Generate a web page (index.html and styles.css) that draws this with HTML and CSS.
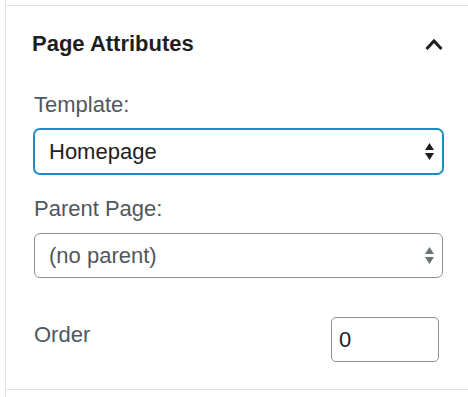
FILE: index.html
```html
<!DOCTYPE html>
<html lang="en">
<head>
  <meta charset="UTF-8">
  <meta name="viewport" content="width=device-width, initial-scale=1.0">
  <title>Page Attributes</title>
  <link rel="stylesheet" href="styles.css">
</head>
<body>
<div class="sidebar">
  <div class="panel">
    <div class="panel-header">
      <h2>Page Attributes</h2>
      <!-- collapse toggle -->
      <svg class="chevron" width="20" height="14" viewBox="0 0 20 14">
        <path d="M2.5 12 L10 4 L17.5 12" fill="none" stroke="#1e1e1e" stroke-width="3"/>
      </svg>
    </div>

    <div class="panel-body">
      <label class="field-label" for="template">Template:</label>
      <div class="select-wrap">
        <select id="template" class="select-field is-focused">
          <option>Homepage</option>
        </select>
        <svg class="select-arrows" width="9" height="17" viewBox="0 0 9 17">
          <path d="M4.5 0 L9 7 L0 7 Z M0 10 L9 10 L4.5 17 Z" fill="#1e1e1e"/>
        </svg>
      </div>

      <label class="field-label" for="parent">Parent Page:</label>
      <div class="select-wrap">
        <select id="parent" class="select-field muted">
          <option>(no parent)</option>
        </select>
        <svg class="select-arrows" width="9" height="17" viewBox="0 0 9 17">
          <path d="M4.5 0 L9 7 L0 7 Z M0 10 L9 10 L4.5 17 Z" fill="#6c7177"/>
        </svg>
      </div>

      <div class="order-row">
        <label class="field-label" for="order">Order</label>
        <input type="text" id="order" class="order-input" value="0">
      </div>
    </div>
  </div>
</div>
</body>
</html>
```

FILE: styles.css
```css
body {
    margin: 0;
    padding: 0;
    font-family: "Liberation Sans", Arial, sans-serif;
    background-color: #fff;
    color: #1e1e1e;
  }

  .sidebar {
    margin-left: 5px;
    padding-top: 5px;
    min-height: 100vh;
    box-sizing: border-box;
    border-left: 1px solid #e0e0e0;
  }

  .panel {
    border-top: 1px solid #e0e0e0;
    border-bottom: 1px solid #e0e0e0;
  }

  .panel-header {
    display: flex;
    justify-content: space-between;
    align-items: center;
    padding: 24px 24px 0 26px;
  }

  .panel-header h2 {
    margin: 0;
    font-size: 22px;
    line-height: 28px;
    font-weight: 700;
    color: #1e1e1e;
  }

  .panel-body {
    padding: 33px 25px 27px 28px;
  }

  .field-label {
    display: block;
    font-size: 22px;
    line-height: 28px;
    color: #50575e;
    margin-bottom: 10px;
  }

  .select-wrap {
    position: relative;
    margin-bottom: 21px;
  }

  .select-field {
    display: block;
    width: 100%;
    height: 45px;
    box-sizing: border-box;
    -webkit-appearance: none;
    appearance: none;
    background-color: #fff;
    border: 1px solid #8c8f94;
    border-radius: 6px;
    padding: 0 40px 0 14px;
    font-family: inherit;
    font-size: 22px;
    color: #1e1e1e;
  }

  .select-field.is-focused {
    border-color: #1a8dc4; /* focus ring */
    box-shadow: 0 0 0 1px #1a8dc4;
  }

  .select-field.muted {
    color: #50575e;
  }

  .select-arrows {
    position: absolute;
    right: 9px;
    top: 14px;
    pointer-events: none;
  }

  .order-row {
    display: flex;
    justify-content: space-between;
    align-items: flex-start;
    margin-top: 39px;
  }

  .order-row .field-label {
    margin: 4px 0 0;
  }

  .order-input {
    width: 108px;
    height: 45px;
    box-sizing: border-box;
    margin-right: 4px;
    border: 1px solid #8c8f94;
    border-radius: 5px;
    padding: 0 7px;
    font-family: inherit;
    font-size: 22px;
    color: #1e1e1e;
  }
```
